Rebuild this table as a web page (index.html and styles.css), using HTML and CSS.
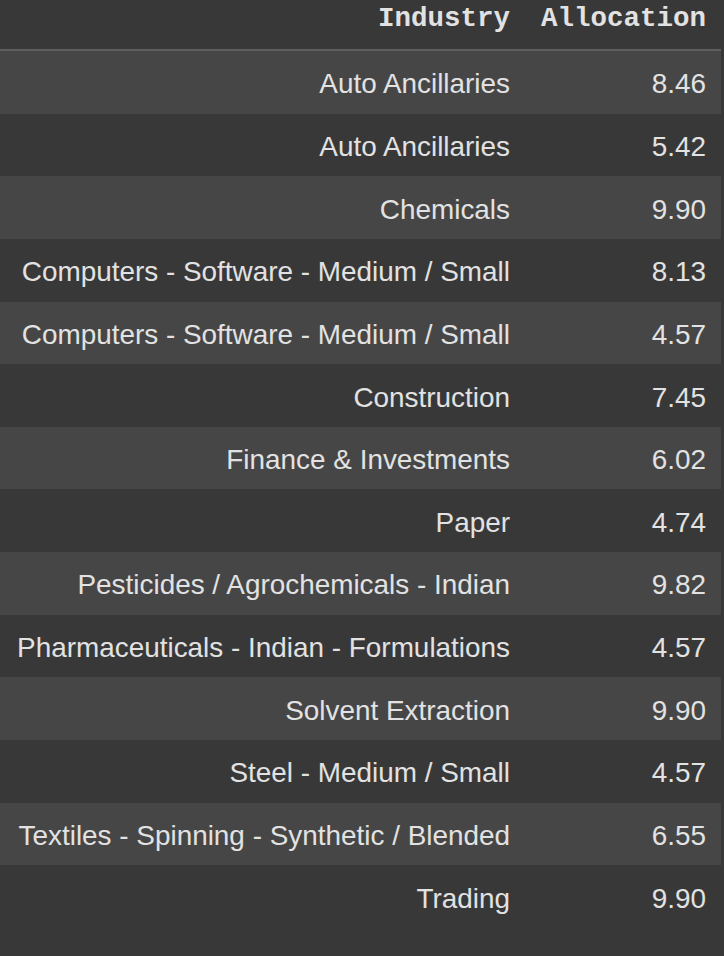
FILE: index.html
```html
<!DOCTYPE html>
<html>
<head>
<meta charset="utf-8">
<link rel="stylesheet" href="styles.css">
</head>
<body>
<table class="df">
  <thead>
    <tr><th class="c1">Industry</th><th class="c2">Allocation</th></tr>
  </thead>
  <tbody>
    <tr><td>Auto Ancillaries</td><td>8.46</td></tr>
    <tr><td>Auto Ancillaries</td><td>5.42</td></tr>
    <tr><td>Chemicals</td><td>9.90</td></tr>
    <tr><td>Computers - Software - Medium / Small</td><td>8.13</td></tr>
    <tr><td>Computers - Software - Medium / Small</td><td>4.57</td></tr>
    <tr><td>Construction</td><td>7.45</td></tr>
    <tr><td>Finance &amp; Investments</td><td>6.02</td></tr>
    <tr><td>Paper</td><td>4.74</td></tr>
    <tr><td>Pesticides / Agrochemicals - Indian</td><td>9.82</td></tr>
    <tr><td>Pharmaceuticals - Indian - Formulations</td><td>4.57</td></tr>
    <tr><td>Solvent Extraction</td><td>9.90</td></tr>
    <tr><td>Steel - Medium / Small</td><td>4.57</td></tr>
    <tr><td>Textiles - Spinning - Synthetic / Blended</td><td>6.55</td></tr>
    <tr><td>Trading</td><td>9.90</td></tr>
  </tbody>
</table>
</body>
</html>
```
FILE: styles.css
```css
html, body {
  margin: 0;
  padding: 0;
  background: #383838;
  height: 100%;
}
.df {
  border-collapse: collapse;
  border-spacing: 0;
  table-layout: fixed;
  width: 721px;
  color: #e2e2e2;
  font-family: "Liberation Sans", Arial, sans-serif;
  font-size: 27.9px;
}
.df th {
  font-family: "Liberation Mono", "Courier New", monospace;
  font-weight: bold;
  font-size: 27.5px;
  text-align: right;
  height: 50px;
  padding: 0 15px;
  vertical-align: top;
  line-height: 38px;
  border-bottom: 2px solid #5e5e5e;
  box-sizing: border-box;
}
.df th.c1 { width: 525px; }
.df th.c2 { width: 196px; }
.df td {
  text-align: right;
  padding: 4px 15px 0;
  height: 58.65px;
  vertical-align: middle;
  white-space: nowrap;
  line-height: 32px;
}
.df tbody tr:nth-child(odd) { background: #464646; }
```
